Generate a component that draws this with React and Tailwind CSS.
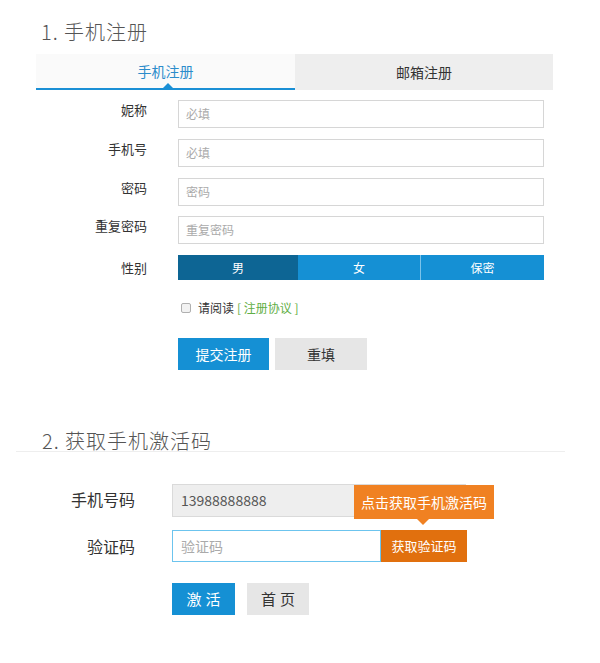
import React from 'react';

const font = "font-['Noto_Sans_CJK_SC','Noto_Sans',sans-serif]";

function Field({ label, placeholder, first }) {
    return (
        <div className={`flex items-start ${first ? 'mt-[10px]' : 'mt-[11px]'}`}>
            <div className="ml-[36px] w-[111px] text-right text-[13px] leading-[20px] text-[#333]">{label}</div>
            <div className="ml-[31px] w-[366px] h-[28px] border border-[#d6d6d6] bg-white flex items-center px-[7px] text-[12px] text-[#aaa]">
                {placeholder}
            </div>
        </div>
    );
}

export default function App() {
    return (
        <div className={`w-[600px] min-h-[663px] bg-white ${font} overflow-hidden`}>
            {/* section 1 */}
            <div className="pt-[20px] pl-[41px] text-[20px] leading-[24px] tracking-[1px] text-[#555] font-light">1. 手机注册</div>

            <div className="mt-[10px] ml-[36px] w-[517px] h-[36px] flex text-[14px]">
                <div className="relative w-[259px] bg-[#fafafa] border-b-2 border-[#1a8fd5] flex items-center justify-center text-[#2b8ccb]">
                    手机注册
                    <span className="absolute bottom-0 left-[127px] w-0 h-0 border-l-[5px] border-r-[5px] border-b-[5px] border-l-transparent border-r-transparent border-b-[#1a8fd5]" />
                </div>
                <div className="flex-1 bg-[#eeeeee] flex items-center justify-center text-[#333]">邮箱注册</div>
            </div>

            <Field label="妮称" placeholder="必填" first />
            <Field label="手机号" placeholder="必填" />
            <Field label="密码" placeholder="密码" />
            <div className="flex items-start mt-[10px]">
                <div className="ml-[36px] w-[111px] text-right text-[13px] leading-[20px] text-[#333]">重复密码</div>
                <div className="ml-[31px] w-[366px] h-[28px] border border-[#d6d6d6] bg-white flex items-center px-[7px] text-[12px] text-[#aaa]">
                    重复密码
                </div>
            </div>

            <div className="flex items-center mt-[11px]">
                <div className="ml-[36px] w-[111px] text-right text-[13px] leading-[20px] text-[#333]">性别</div>
                <div className="ml-[31px] w-[366px] h-[25px] flex text-[12px] text-white">
                    <div className="w-[120px] bg-[#0d6594] flex items-center justify-center">男</div>
                    <div className="w-[123px] bg-[#1590d4] border-r border-[#7cc3ea] flex items-center justify-center">女</div>
                    <div className="flex-1 bg-[#1590d4] flex items-center justify-center">保密</div>
                </div>
            </div>

            <div className="mt-[18px] ml-[181px] h-[20px] flex items-center text-[12px]">
                <span className="w-[10px] h-[10px] rounded-[2px] border border-[#b0b0b0] bg-[#f2f2f2]" />
                <span className="ml-[7px] text-[#333]">请阅读</span>
                <span className="ml-[3px] text-[#5fae45]">[ 注册协议 ]</span>
            </div>

            <div className="mt-[20px] ml-[178px] flex gap-[6px] text-[14px]">
                <div className="w-[91px] h-[32px] bg-[#1590d4] text-white flex items-center justify-center">提交注册</div>
                <div className="w-[92px] h-[32px] bg-[#e6e6e6] text-[#333] flex items-center justify-center">重填</div>
            </div>

            {/* section 2 */}
            <div className="mt-[60px] ml-[16px] w-[549px] border-b border-[#eeeeee]">
                <div className="pl-[26px] text-[20px] leading-[21px] tracking-[1px] text-[#555] font-light">2. 获取手机激活码</div>
            </div>

            <div className="relative mt-[32px] flex items-center h-[33px]">
                <div className="w-[135px] text-right text-[16px] leading-[20px] text-[#333] pb-[3px]">手机号码</div>
                <div className="ml-[37px] w-[294px] h-[33px] bg-[#eeeeee] border border-[#dadada] flex items-center pl-[8px] text-[14px] text-[#555]">
                    13988888888
                </div>
                <div className="absolute left-[354px] top-[1px] w-[140px] h-[34px] bg-[#f08122] text-white text-[14px] flex items-center justify-center">
                    点击获取手机激活码
                    <span className="absolute left-[63px] top-full w-0 h-0 border-l-[6px] border-r-[6px] border-t-[6px] border-l-transparent border-r-transparent border-t-[#f08122]" />
                </div>
            </div>

            <div className="mt-[13px] flex items-center h-[32px]">
                <div className="w-[135px] text-right text-[16px] leading-[20px] text-[#333]">验证码</div>
                <div className="ml-[37px] w-[209px] h-[32px] border border-[#6cc4ee] bg-white flex items-center pl-[8px] text-[14px] text-[#aaa]">
                    验证码
                </div>
                <div className="w-[86px] h-[32px] bg-[#e1700e] text-white text-[13px] flex items-center justify-center">获取验证码</div>
            </div>

            <div className="mt-[21px] ml-[172px] flex gap-[12px] text-[15px]">
                <div className="w-[63px] h-[32px] bg-[#1590d4] text-white flex items-center justify-center tracking-[4px] pl-[4px]">激活</div>
                <div className="w-[62px] h-[32px] bg-[#e6e6e6] text-[#333] flex items-center justify-center tracking-[4px] pl-[4px]">首页</div>
            </div>
        </div>
    );
}
